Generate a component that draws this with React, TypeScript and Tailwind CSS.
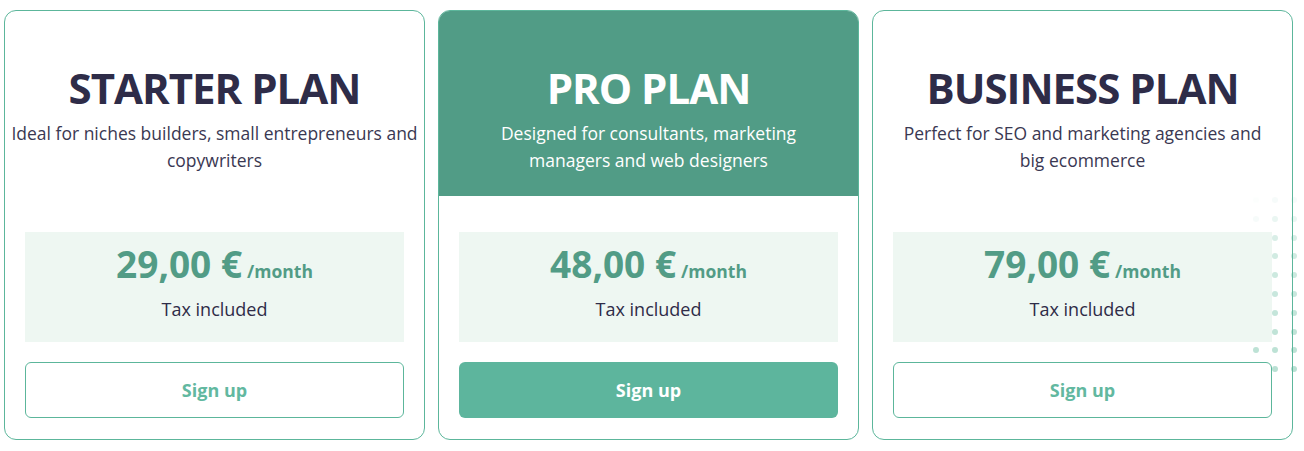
import React from 'react';

interface Plan {
  name: string;
  description: string[];
  price: string;
  featured?: boolean;
}

const plans: Plan[] = [
  {
    name: 'STARTER PLAN',
    description: ['Ideal for niches builders, small entrepreneurs and', 'copywriters'],
    price: '29,00 €',
  },
  {
    name: 'PRO PLAN',
    description: ['Designed for consultants, marketing', 'managers and web designers'],
    price: '48,00 €',
    featured: true,
  },
  {
    name: 'BUSINESS PLAN',
    description: ['Perfect for SEO and marketing agencies and', 'big ecommerce'],
    price: '79,00 €',
  },
];

// decorative dot grid peeking out behind the last card
const DotGrid: React.FC = () => {
  const rows = [0.12, 0.3, 0.55, 0.65, 0.72, 0.78, 0.84, 0.9, 0.95, 1];
  const cols = [1256, 1275, 1294, 1313];
  return (
    <div className="absolute left-0 top-0 pointer-events-none">
      {rows.map((op, r) =>
        cols.map((x, c) => (
          <span
            key={`${r}-${c}`}
            className="absolute w-[6px] h-[6px] rounded-full bg-[#b9e0d3]"
            style={{ left: x - 3, top: 200 + r * 18.8 - 3, opacity: c === 0 && r < 7 ? op * 0.4 : op }}
          />
        ))
      )}
    </div>
  );
};

const PlanCard: React.FC<{ plan: Plan }> = ({ plan }) => {
  const featured = !!plan.featured;
  return (
    <div className="relative w-[421px] h-[430px] rounded-[12px] border border-[#5cb69b] overflow-hidden flex flex-col">
      <div
        className={`h-[185px] flex flex-col items-center pt-[51px] text-center ${
          featured ? 'bg-[#519c86] text-white' : 'text-[#2e2c48]'
        }`}
      >
        <h2 className="text-[42px] leading-[52px] font-bold tracking-[-1px]">{plan.name}</h2>
        <p
          className={`mt-[6px] text-[17.5px] leading-[27px] ${featured ? 'text-white' : 'text-[#3a3852]'}`}
        >
          {plan.description.map((line, i) => (
            <React.Fragment key={i}>
              {i > 0 && <br />}
              {line}
            </React.Fragment>
          ))}
        </p>
      </div>
      <div className="flex flex-col px-[20px] pt-[36px]">
        <div className="h-[110px] bg-[#eef7f2] flex flex-col items-center pt-[10px]">
          <div className="flex items-baseline gap-[5px] text-[#529c86] font-bold">
            <span className="text-[37px] leading-[44px]">{plan.price}</span>
            <span className="text-[17.5px]">/month</span>
          </div>
          <div className="mt-[11px] text-[18px] leading-[24px] text-[#2e2c48]">Tax included</div>
        </div>
        <button
          className={`mt-[20px] h-[56px] rounded-[6px] text-[18px] font-bold ${
            featured
              ? 'bg-[#5db59d] text-white'
              : 'bg-white border border-[#5cb69b] text-[#62b8a0]'
          }`}
        >
          Sign up
        </button>
      </div>
    </div>
  );
};

export default function App() {
  return (
    <div
      className="relative w-[1304px] h-[451px] bg-white overflow-hidden"
      style={{ fontFamily: '"Open Sans", "Noto Sans", sans-serif' }}
    >
      <DotGrid />
      <div className="relative flex gap-[13px] pl-[4px] pt-[10px]">
        {plans.map((p) => (
          <PlanCard key={p.name} plan={p} />
        ))}
      </div>
    </div>
  );
}
